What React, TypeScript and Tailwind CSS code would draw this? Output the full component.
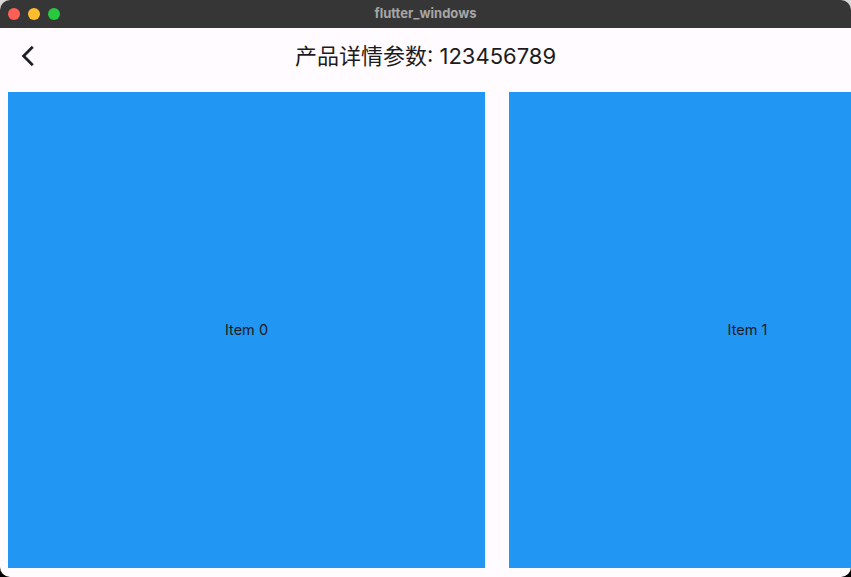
export default function App() {
  const items = ["Item 0", "Item 1"];

  return (
    <div className="h-[577px] w-[851px] bg-[linear-gradient(to_bottom,#d8d8d8_50%,#000_50%)]">
      <div className="flex h-full w-full flex-col overflow-hidden rounded-[10px] bg-[#fffbfe]">
        {/* Title bar */}
        <div className="relative flex h-[28px] shrink-0 items-center justify-center bg-[#363636]">
          <div className="absolute left-[8px] top-[8px] flex gap-[8px]">
            <span className="h-[12px] w-[12px] rounded-full bg-[#fe5f57]" />
            <span className="h-[12px] w-[12px] rounded-full bg-[#febc2e]" />
            <span className="h-[12px] w-[12px] rounded-full bg-[#28c840]" />
          </div>
          <span className="font-['Inter','Liberation_Sans',sans-serif] text-[13px] font-bold text-[#a6a6a6]">
            flutter_windows
          </span>
        </div>

        {/* App bar */}
        <div className="relative flex h-[56px] shrink-0 items-center justify-center">
          <button className="absolute left-0 top-0 flex h-[56px] w-[56px] items-center justify-center">
            <svg width="24" height="24" viewBox="0 0 24 24" className="mt-[-1px]">
              <path
                d="M17.51 3.87L15.73 2.1 5.84 12l9.9 9.9 1.77-1.77L9.38 12l8.13-8.13z"
                fill="#1d1b20"
                stroke="#1d1b20"
                strokeWidth="0.4"
              />
            </svg>
          </button>
          <h1 className="font-['Inter','Noto_Sans_CJK_SC',sans-serif] text-[22px] text-[#1d1b20]">
            产品详情参数: 123456789
          </h1>
        </div>

        {/* Horizontal list */}
        <div className="flex flex-1 gap-[24px] overflow-hidden px-[8px] pt-[8px]">
          {items.map((item) => (
            <div
              key={item}
              className="flex h-[476px] w-[477px] shrink-0 items-center justify-center bg-[#2196f3]"
            >
              <span className="font-['Inter','Liberation_Sans',sans-serif] text-[14.5px] text-[#1d1b20]">
                {item}
              </span>
            </div>
          ))}
        </div>
      </div>
    </div>
  );
}
